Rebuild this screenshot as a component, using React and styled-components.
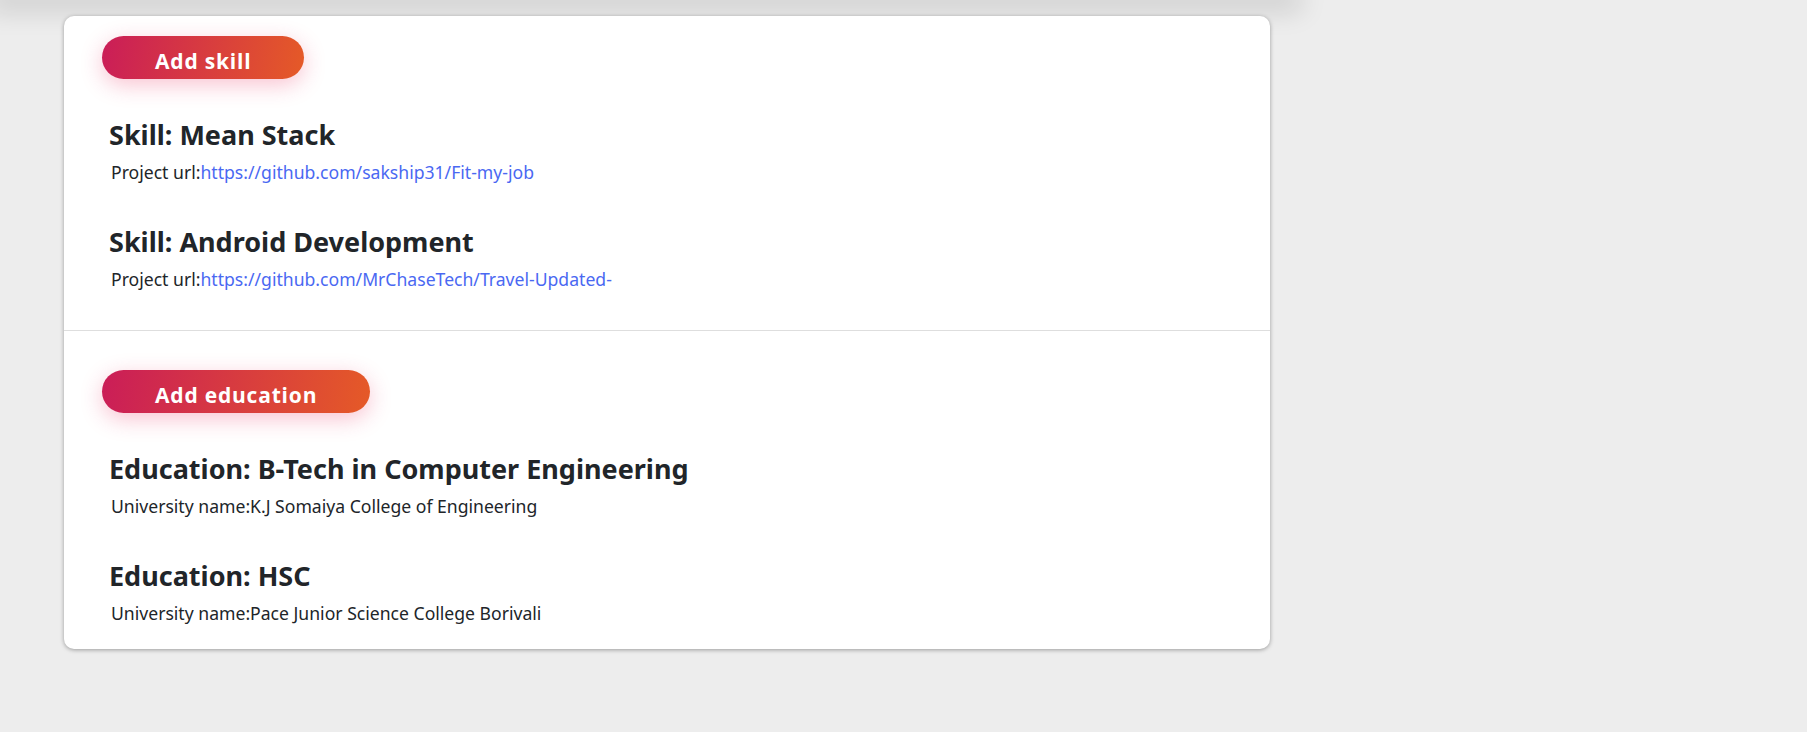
import React from 'react';
import styled, { createGlobalStyle } from 'styled-components';

const GlobalStyle = createGlobalStyle`
	html, body {
		margin: 0;
		padding: 0;
		background: #ededed;
		font-family: "Noto Sans", "Open Sans", sans-serif;
		color: #212529;
	}
	* {
		box-sizing: border-box;
	}
`;

const PageSd = styled.div`
	min-height: 732px;
	overflow: hidden;
`;
const TopShadeSd = styled.div`
	width: 1290px;
	height: 0;
	box-shadow: 0 0 26px 12px rgba(0, 0, 0, 0.13);
`;
const CardSd = styled.div`
	width: 1206px;
	margin: 16px 0 0 64px;
	background: #fff;
	border-radius: 10px;
	box-shadow: 0 1px 4px rgba(0, 0, 0, 0.35);
`;
const SectionSd = styled.section`
	padding: ${props => props.top}px 0 ${props => props.bottom}px;
`;
const DividerSd = styled.hr`
	margin: 0;
	border: 0;
	border-top: 1px solid #dedede;
`;
const AddButtonSd = styled.button`
	display: inline-block;
	margin-left: 38px;
	height: 43px;
	padding: 8px 53px 0;
	border: 0;
	border-radius: 22px;
	background: linear-gradient(100deg, #ca1d58 0%, #e55a27 100%);
	box-shadow: 0 6px 22px rgba(232, 40, 90, 0.28);
	color: #fff;
	font-family: "Open Sans", sans-serif;
	font-weight: 700;
	font-size: 21px;
	letter-spacing: 0.8px;
	line-height: 35px;
	cursor: pointer;
`;
const ListSd = styled.div`
	padding: 0 0 0 45px;
	margin-top: 38px;
`;
const ItemSd = styled.div`
	margin-bottom: ${props => props.last ? 0 : 38}px;
`;
const TitleSd = styled.h3`
	margin: 0 0 6px;
	font-size: 27px;
	font-weight: 700;
	line-height: 36px;
	color: #212529;
`;
const DetailSd = styled.p`
	margin: 0;
	padding-left: 2px;
	font-size: 17.6px;
	line-height: 27px;
	color: #212529;
`;
const LinkSd = styled.a`
	color: #4a68f2;
	text-decoration: none;
`;

const skills = [
	{ name: 'Mean Stack', url: 'https://github.com/sakship31/Fit-my-job' },
	{ name: 'Android Development', url: 'https://github.com/MrChaseTech/Travel-Updated-' }
];

const education = [
	{ name: 'B-Tech in Computer Engineering', university: 'K.J Somaiya College of Engineering' },
	{ name: 'HSC', university: 'Pace Junior Science College Borivali' }
];

const App = () => (
	<PageSd>
		<GlobalStyle />
		<TopShadeSd />
		<CardSd>
			<SectionSd top={20} bottom={37}>
				<AddButtonSd>Add skill</AddButtonSd>
				<ListSd>
					{skills.map((s, i) => (
						<ItemSd key={s.name} last={i === skills.length - 1}>
							<TitleSd>{`Skill: ${s.name}`}</TitleSd>
							<DetailSd>
								Project url:<LinkSd href={s.url}>{s.url}</LinkSd>
							</DetailSd>
						</ItemSd>
					))}
				</ListSd>
			</SectionSd>
			<DividerSd />
			<SectionSd top={39} bottom={22}>
				<AddButtonSd>Add education</AddButtonSd>
				<ListSd>
					{education.map((e, i) => (
						<ItemSd key={e.name} last={i === education.length - 1}>
							<TitleSd>{`Education: ${e.name}`}</TitleSd>
							<DetailSd>{`University name:${e.university}`}</DetailSd>
						</ItemSd>
					))}
				</ListSd>
			</SectionSd>
		</CardSd>
	</PageSd>
);

export default App;
